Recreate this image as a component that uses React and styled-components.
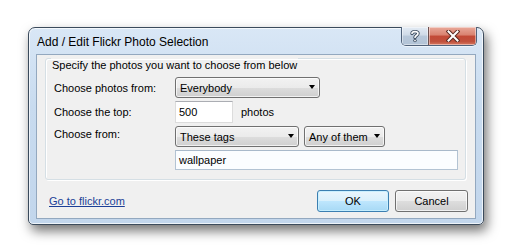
import React from 'react';
import styled, { createGlobalStyle } from 'styled-components';

const GlobalStyle = createGlobalStyle`
    html, body {
        margin: 0;
        padding: 0;
        background: #ffffff;
    }
    body {
        font-family: "Liberation Sans", Arial, sans-serif;
        font-size: 11px;
        color: #000;
    }
`;

const Desktop = styled.div`
    width: 512px;
    height: 251px;
    padding: 27px 0 0 28px;
    box-sizing: border-box;
    overflow: hidden;
`;

const Window = styled.div`
    width: 456px;
    height: 198px;
    box-sizing: border-box;
    display: flex;
    flex-direction: column;
    border: 1px solid #3b4b5c;
    border-radius: 7px 7px 5px 5px;
    background: linear-gradient(180deg, #d9e7f6 0%, #c8dbef 40%, #c2d6ec 100%);
    box-shadow: inset 0 0 0 1px rgba(255, 255, 255, 0.7), 3px 6px 12px rgba(0, 0, 0, 0.55);
    padding: 0 7px 5px 7px;
`;

const TitleBar = styled.div`
    display: flex;
    align-items: flex-start;
    height: 26px;
    flex-shrink: 0;
`;

const Title = styled.div`
    flex: 1;
    align-self: center;
    padding-left: 1px;
    padding-top: 1px;
    font-size: 12px;
    color: #000;
`;

const CaptionButtons = styled.div`
    display: flex;
    margin-top: -1px;
    margin-right: -1px;
    border: 1px solid #50627a;
    border-top: none;
    border-radius: 0 0 5px 5px;
    overflow: hidden;
    box-shadow: 0 1px 0 rgba(255, 255, 255, 0.6);
`;

const CaptionButton = styled.div`
    height: 18px;
    width: ${(props) => props.$width}px;
    display: flex;
    align-items: center;
    justify-content: center;
    background: ${(props) => props.$close
        ? 'linear-gradient(180deg, #e9a99a 0%, #d9826f 45%, #c34a36 50%, #c0503c 80%, #d67860 100%)'
        : 'linear-gradient(180deg, #e3ebf4 0%, #cfdae7 45%, #b8c8da 50%, #b2c3d6 100%)'};
    border-left: ${(props) => props.$close ? '1px solid #6c5050' : 'none'};
    box-shadow: inset 0 0 0 1px rgba(255, 255, 255, 0.45);
`;

const Client = styled.div`
    flex: 1;
    display: flex;
    flex-direction: column;
    background: #f0f0f0;
    border: 1px solid #93a8bf;
    padding: 0 7px 5px 8px;
`;

const GroupBox = styled.fieldset`
    margin: -11px 2px 0 0;
    padding: 5px 7px 9px 8px;
    border: 1px solid #d5dfe5;
    border-radius: 3px;
    box-shadow: inset 1px 1px 0 #ffffff, 1px 1px 0 #ffffff;
    display: grid;
    grid-template-columns: 121px 1fr;
    row-gap: 3px;
    align-items: center;
`;

const Legend = styled.legend`
    padding: 14px 1px 0;
    margin-left: -3px;
    line-height: 14px;
`;

const Label = styled.div`
    align-self: ${(props) => props.$top ? 'start' : 'center'};
    padding-top: ${(props) => props.$top ? '2px' : '0'};
    white-space: nowrap;
`;

const Controls = styled.div`
    display: flex;
    align-items: center;
    gap: 5px;
`;

const Combo = styled.div`
    position: relative;
    width: ${(props) => props.$width}px;
    height: 21px;
    box-sizing: border-box;
    border: 1px solid #707070;
    border-radius: 3px;
    background: linear-gradient(180deg, #f2f2f2 0%, #ebebeb 50%, #dddddd 51%, #cfcfcf 100%);
    box-shadow: inset 0 0 0 1px rgba(255, 255, 255, 0.7);
    display: flex;
    align-items: center;
    padding-left: 4px;
    white-space: nowrap;
`;

const Arrow = styled.span`
    position: absolute;
    right: 4px;
    top: 7px;
    width: 0;
    height: 0;
    border-left: 3.5px solid transparent;
    border-right: 3.5px solid transparent;
    border-top: 4px solid #000;
`;

const TextBox = styled.div`
    width: ${(props) => props.$width ? `${props.$width}px` : 'auto'};
    flex: ${(props) => props.$width ? '0 0 auto' : '1'};
    height: ${(props) => props.$height || 22}px;
    box-sizing: border-box;
    border: 1px solid ${(props) => props.$focus ? '#b3c3d3' : '#dcdcdc'};
    border-top-color: ${(props) => props.$focus ? '#a9b9ca' : '#abadb3'};
    background: ${(props) => props.$focus ? '#fbfdff' : '#ffffff'};
    display: flex;
    align-items: center;
    padding-left: 3px;
`;

const Suffix = styled.span`
    margin-left: 3px;
`;

const Footer = styled.div`
    display: flex;
    align-items: center;
    margin-top: 10px;
    padding-left: 4px;
`;

const Link = styled.a`
    flex: 1;
    color: #1c3f97;
    text-decoration: underline;
    cursor: pointer;
`;

const Button = styled.button`
    width: ${(props) => props.$width}px;
    height: 22px;
    margin-left: 6px;
    padding: 0;
    font-family: inherit;
    font-size: 11px;
    color: #000;
    border-radius: 3px;
    border: 1px solid ${(props) => props.$default ? '#3c7fb1' : '#707070'};
    background: ${(props) => props.$default
        ? 'linear-gradient(180deg, #eaf6fd 0%, #d9f0fc 50%, #bee6fd 51%, #a7d9f5 100%)'
        : 'linear-gradient(180deg, #f2f2f2 0%, #ebebeb 50%, #dddddd 51%, #cfcfcf 100%)'};
    box-shadow: inset 0 0 0 1px ${(props) => props.$default ? 'rgba(200, 240, 255, 0.9)' : 'rgba(255, 255, 255, 0.7)'};
`;

const HelpGlyph = () => (
    <svg width="12" height="14" viewBox="0 0 12 14">
        <path d="M3 4.5 C3 2 9 2 9 4.5 C9 6.5 6 6.5 6 8.5" fill="none" stroke="#3a4a5e" strokeWidth="3.4" strokeLinecap="round" />
        <path d="M3 4.5 C3 2 9 2 9 4.5 C9 6.5 6 6.5 6 8.5" fill="none" stroke="#ffffff" strokeWidth="1.6" strokeLinecap="round" />
        <circle cx="6" cy="11.6" r="1.7" fill="#3a4a5e" />
        <circle cx="6" cy="11.6" r="0.9" fill="#ffffff" />
    </svg>
);

const CloseGlyph = () => (
    <svg width="14" height="12" viewBox="0 0 14 12">
        <path d="M2.5 1.5 L11.5 10.5 M11.5 1.5 L2.5 10.5" stroke="#5a2a22" strokeWidth="4" strokeLinecap="square" />
        <path d="M2.5 1.5 L11.5 10.5 M11.5 1.5 L2.5 10.5" stroke="#ffffff" strokeWidth="2" strokeLinecap="square" />
    </svg>
);

const App = () => {
    return (
        <Desktop>
            <GlobalStyle />
            <Window>
                <TitleBar>
                    <Title>Add / Edit Flickr Photo Selection</Title>
                    <CaptionButtons>
                        <CaptionButton $width={26}><HelpGlyph /></CaptionButton>
                        <CaptionButton $width={47} $close><CloseGlyph /></CaptionButton>
                    </CaptionButtons>
                </TitleBar>
                <Client>
                    <GroupBox>
                        <Legend>Specify the photos you want to choose from below</Legend>

                        <Label>Choose photos from:</Label>
                        <Controls>
                            <Combo $width={145}>Everybody<Arrow /></Combo>
                        </Controls>

                        <Label>Choose the top:</Label>
                        <Controls>
                            <TextBox $width={58} $height={22}>500</TextBox>
                            <Suffix>photos</Suffix>
                        </Controls>

                        <Label $top>Choose from:</Label>
                        <Controls>
                            <Combo $width={124}>These tags<Arrow /></Combo>
                            <Combo $width={81}>Any of them<Arrow /></Combo>
                        </Controls>

                        <span />
                        <Controls>
                            <TextBox $focus $height={20}>wallpaper</TextBox>
                        </Controls>
                    </GroupBox>
                    <Footer>
                        <Link>Go to flickr.com</Link>
                        <Button $default $width={72}>OK</Button>
                        <Button $width={73}>Cancel</Button>
                    </Footer>
                </Client>
            </Window>
        </Desktop>
    );
};

export default App;
